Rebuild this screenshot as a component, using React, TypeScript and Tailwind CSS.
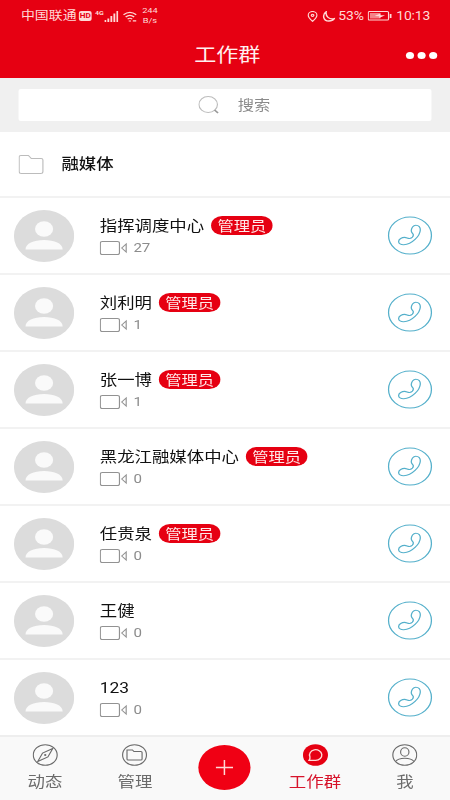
import type { ReactNode } from "react";

type Contact = {
  name: string;
  count: number;
  admin?: boolean;
};

const contacts: Contact[] = [
  { name: "指挥调度中心", count: 27, admin: true },
  { name: "刘利明", count: 1, admin: true },
  { name: "张一博", count: 1, admin: true },
  { name: "黑龙江融媒体中心", count: 0, admin: true },
  { name: "任贵泉", count: 0, admin: true },
  { name: "王健", count: 0 },
  { name: "123", count: 0 },
];

const StatusBar = () => (
  <div className="flex h-8 items-center justify-between pl-[18px] pr-[17px] text-xs leading-none text-[#ffd9d6]">
    <div className="flex items-center">
      <span>中国联通</span>
      <span className="ml-[2px] flex h-[10px] w-[11px] items-center justify-center rounded-[2px] bg-[#ffd9d6] text-[7px] font-bold text-[#e60012]">
        HD
      </span>
      <span className="ml-[3px] mb-[7px] text-[6px] font-bold">4G</span>
      <svg width="12" height="11" viewBox="0 0 12 11" fill="currentColor">
        <path d="M0 9h1.6v2H0zM2.6 7.5h1.6V11H2.6zM5.2 5h1.6v6H5.2zM7.8 2.5h1.6V11H7.8zM10.4 0H12v11h-1.6z" />
      </svg>
      <svg className="ml-[4px]" width="12" height="11" viewBox="0 0 12 11" fill="none" stroke="currentColor" strokeWidth="1.2">
        <path d="M.5 3.8Q6-1.2 11.5 3.8M2.3 6Q6 2.6 9.7 6M4 8.1Q6 6.4 8 8.1" />
        <path d="M5 10h2M8.5 9.8h3" />
      </svg>
      <span className="ml-[5px] flex flex-col items-center text-[8px] leading-[10px]">
        <span>244</span>
        <span>B/s</span>
      </span>
    </div>
    <div className="flex items-center">
      <svg width="9" height="11" viewBox="0 0 9 11" fill="none" stroke="currentColor" strokeWidth="1.1">
        <path d="M4.5 10.3C2.2 8 .7 6.3.7 4.3a3.8 3.8 0 0 1 7.6 0c0 2-1.5 3.7-3.8 6Z" />
        <circle cx="4.5" cy="4.3" r="1.1" />
      </svg>
      <svg className="ml-[4px]" width="11" height="11" viewBox="0 0 11 11" fill="none" stroke="currentColor" strokeWidth="1.3">
        <path d="M3.2.8C-.2 3.300.300 10 5.500 10c2.200 0 3.900-1 4.700-2.400C5.900 8.900 2.500 5.200 3.200.8Z" />
      </svg>
      <span className="ml-[3px] text-[12px] tracking-[-0.1px]">53%</span>
      <svg className="ml-[3px]" width="21" height="10" viewBox="0 0 21 10" fill="none" stroke="currentColor">
        <rect x=".5" y=".5" width="17.500" height="8.500" rx="1" />
        <path d="M2 2h9v5.500H2z" fill="currentColor" stroke="none" opacity=".6" />
        <path d="M6 5l5-2.500v1.800h4L10 7V5.200z" fill="currentColor" stroke="none" />
        <path d="M19.800 3v4" strokeWidth="1.500" />
      </svg>
      <span className="ml-[4px] text-[12px] tracking-[-0.1px]">10:13</span>
    </div>
  </div>
);

const Avatar = () => (
  <svg className="shrink-0" width="52" height="52" viewBox="0 0 52 52">
    <circle cx="26" cy="26" r="26" fill="#dcdcdc" />
    <circle cx="26" cy="19" r="7.8" fill="#fafafa" />
    <path d="M10 39.500c0-6 7-9.500 16-9.500s16 3.500 16 9.500Z" fill="#fafafa" />
  </svg>
);

const CallButton = () => (
  <button className="ml-auto">
    <svg width="39" height="39" viewBox="0 0 39 39" fill="none" stroke="#55b0cb" strokeWidth="1.1">
      <circle cx="19.500" cy="19.500" r="18.500" />
      <path d="M24.500 9.200c2.700 0 4 2 3.900 4.800-.3 6-7 14.300-14.300 14.700-2.600.1-4.400-1.200-4.400-3.300 0-2.600 3-4 5.200-4 1.800 0 2.800 1.500 4.400 1.100 1.700-.5 3-2 3.100-3.500.1-1.600-1.800-1.900-1.800-4.200 0-2.600 1.600-5.600 3.900-5.600Z" />
    </svg>
  </button>
);

const ContactRow = ({ name, count, admin }: Contact) => (
  <div className="flex h-[77px] shrink-0 items-center border-t-2 border-[#f2f2f2] pl-3 pr-[15px]">
    <Avatar />
    <div className="ml-[22px] flex flex-col">
      <div className="flex h-5 items-center">
        <span className="pt-px text-[15px] leading-5 text-[#111]">{name}</span>
        {admin && (
          <span className="ml-[6px] flex h-[19px] w-[53px] items-center justify-center rounded-full bg-[#e60012] pt-px text-[14px] leading-none text-[#ffe9e9]">
            管理员
          </span>
        )}
      </div>
      <div className="mt-[3px] flex h-[18px] items-center pt-px text-[13px] leading-none text-[#8c8c8c]">
        <svg width="25" height="14" viewBox="0 0 25 14" fill="none" stroke="#929292">
          <rect x=".5" y=".5" width="16.500" height="13" rx="1.800" />
          <path d="M22.800 3v8l-3.800-4Z" />
        </svg>
        <span className="ml-[4px]">{count}</span>
      </div>
    </div>
    <CallButton />
  </div>
);

const NavItem = ({ label, active, children }: { label: string; active?: boolean; children: ReactNode }) => (
  <div className={active ? "flex flex-1 flex-col items-center text-[#d7142b]" : "flex flex-1 flex-col items-center text-[#6b6b6b]"}>
    <svg className="mt-[7px]" width="22" height="22" viewBox="0 0 22 22" fill="none" stroke="currentColor">
      {children}
    </svg>
    <span className="mt-[6px] text-[15px] leading-5">{label}</span>
  </div>
);

const BottomNav = () => (
  <div className="flex h-[65px] shrink-0 border-t-2 border-[#eeeeee] bg-[#f9f9f9]">
    <NavItem label="动态">
      <circle cx="11" cy="11" r="10.300" />
      <path d="M17.500 4.500 13.300 13 4.500 17.500 8.700 9Z" />
      <circle cx="11" cy="11" r=".5" />
    </NavItem>
    <NavItem label="管理">
      <circle cx="11" cy="11" r="10.300" />
      <path d="M4.500 6h4.700l1.300 1.600H16.500c.6 0 1 .4 1 1V15c0 .6-.4 1-1 1h-11c-.6 0-1-.4-1-1Z" />
    </NavItem>
    <div className="flex flex-1 justify-center">
      <button className="mt-[8px] flex h-[45px] w-[45px] items-center justify-center rounded-full bg-[#f00014]">
        <svg width="15" height="15" viewBox="0 0 15 15" stroke="#ffd9d6" strokeWidth="1.300">
          <path d="M7.500 0v15M0 7.500h15" />
        </svg>
      </button>
    </div>
    <NavItem label="工作群" active>
      <circle cx="11" cy="11" r="10.800" fill="#e60012" stroke="none" />
      <path d="M5.500 16.300h5.700a5.300 5.300 0 1 0-5-3.500c.2 1.200 0 2.400-.7 3.500Z" stroke="#ffd9d6" strokeWidth="1.200" />
    </NavItem>
    <NavItem label="我">
      <circle cx="11" cy="11" r="10.300" />
      <ellipse cx="11" cy="8" rx="3.600" ry="4.300" />
      <path d="M3 17.500c1.500-2.300 4.500-3.300 8-3.300s6.500 1 8 3.300" />
    </NavItem>
  </div>
);

const App = () => {
  return (
    <div className="h-[800px] w-[450px] overflow-hidden bg-white">
      {/* narrow layout widened to the full screen */}
      <div className="flex h-[800px] w-[388px] origin-top-left scale-x-[1.1598] flex-col font-[Roboto,'Noto_Sans_CJK_SC',sans-serif]">
        <header className="h-[78px] shrink-0 bg-[#e60012]">
          <StatusBar />
          <div className="grid h-[46px] grid-cols-3 items-center pr-[11px] pl-[15px]">
            <span />
            <h1 className="text-center text-[19px] leading-none text-[#fff0f0]">工作群</h1>
            <div className="flex justify-end gap-[3px]">
              <span className="h-[7px] w-[7px] rounded-full bg-white" />
              <span className="h-[7px] w-[7px] rounded-full bg-white" />
              <span className="h-[7px] w-[7px] rounded-full bg-white" />
            </div>
          </div>
        </header>
        <div className="h-[54px] shrink-0 bg-[#f0f0f0] px-4 pt-[11px]">
          <div className="flex h-8 items-center justify-center rounded-[2px] bg-white pl-4 text-[14px] leading-none text-[#8a8a8a]">
            <svg width="18" height="18" viewBox="0 0 18 18" fill="none" stroke="#bdbdbd">
              <circle cx="8.500" cy="8.500" r="8" />
              <path d="m14 14 3 3" stroke="#999" strokeWidth="1.500" />
            </svg>
            <span className="ml-4">搜索</span>
          </div>
        </div>
        <div className="flex h-16 shrink-0 items-center pl-4">
          <svg width="22" height="19" viewBox="0 0 22 19" fill="none" stroke="#bcbcbc">
            <path d="M.5 2A1.500 1.500 0 0 1 2 .5h6.500L11 3.500h8.500A1.500 1.500 0 0 1 21 5v11.500a2 2 0 0 1-2 2H2.500a2 2 0 0 1-2-2Z" />
          </svg>
          <span className="ml-[15px] text-[15px] leading-none font-medium text-[#111]">融媒体</span>
        </div>
        {contacts.map((contact) => (
          <ContactRow key={contact.name} {...contact} />
        ))}
        <BottomNav />
      </div>
    </div>
  );
};

export default App;
